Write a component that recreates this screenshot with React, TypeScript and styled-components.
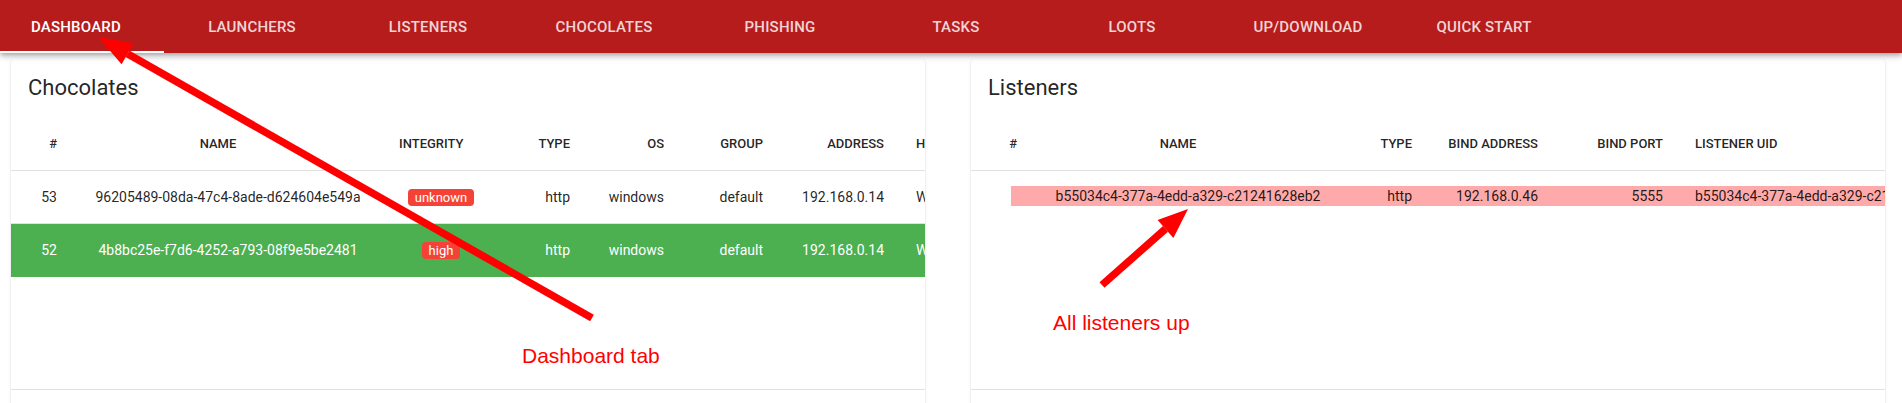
import React from 'react';
import styled, { createGlobalStyle } from 'styled-components';

const GlobalStyle = createGlobalStyle`
  html, body { margin: 0; padding: 0; background: #fff; }
  body {
    font-family: Roboto, "Liberation Sans", Arial, sans-serif;
    color: rgba(0, 0, 0, 0.87);
    overflow: hidden;
  }
  * { box-sizing: border-box; }
`;

const Page = styled.div`
  position: relative;
  width: 1902px;
  height: 403px;
  overflow: hidden;
  background: #fff;
`;

const NavBar = styled.header`
  position: relative;
  z-index: 2;
  height: 53px;
  background: #b71c1c;
  box-shadow: 0 2px 4px -1px rgba(0, 0, 0, 0.2), 0 4px 5px 0 rgba(0, 0, 0, 0.14),
    0 1px 10px 0 rgba(0, 0, 0, 0.12);
  display: flex;
  overflow: hidden;
`;

const TabList = styled.nav`
  display: flex;
  margin-left: -12px;
`;

const Tab = styled.div<{ $active?: boolean }>`
  position: relative;
  flex: 0 0 176px;
  height: 53px;
  display: flex;
  align-items: center;
  justify-content: center;
  font-size: 15px;
  font-weight: 500;
  letter-spacing: 0.2px;
  text-transform: uppercase;
  white-space: nowrap;
  color: ${(p) => (p.$active ? '#ffffff' : 'rgba(255, 255, 255, 0.82)')};

  &::after {
    content: '';
    display: ${(p) => (p.$active ? 'block' : 'none')};
    position: absolute;
    left: 12px;
    right: 0;
    bottom: 0;
    height: 2px;
    background: #ffffff;
  }
`;

const Content = styled.main`
  display: grid;
  grid-template-columns: 914px 914px;
  column-gap: 46px;
  padding: 6px 0 0 11px;
`;

const Card = styled.section`
  position: relative;
  height: 400px;
  background: #fff;
  border-radius: 4px;
  overflow: hidden;
  box-shadow: 0 2px 1px -1px rgba(0, 0, 0, 0.2), 0 1px 1px 0 rgba(0, 0, 0, 0.14),
    0 1px 3px 0 rgba(0, 0, 0, 0.12);
`;

const CardTitle = styled.h2`
  margin: 0;
  padding: 16px 17px 17px;
  font-size: 22px;
  font-weight: 400;
  line-height: 26px;
  color: rgba(0, 0, 0, 0.87);
`;

type Align = 'left' | 'center' | 'right';

const justify = (a: Align) =>
  a === 'center' ? 'center' : a === 'right' ? 'flex-end' : 'flex-start';

const HeadRow = styled.div<{ $cols: string }>`
  display: grid;
  grid-template-columns: ${(p) => p.$cols};
  height: 53px;
  align-items: center;
  border-bottom: 1px solid #e0e0e0;
`;

const HeadCell = styled.div<{ $align: Align }>`
  display: flex;
  justify-content: ${(p) => justify(p.$align)};
  padding: 0 16px;
  font-size: 13px;
  font-weight: 500;
  line-height: 1.2;
  white-space: nowrap;
  color: rgba(0, 0, 0, 0.87);
`;

const SortSpace = styled.span`
  display: inline-block;
  width: 20px;
`;

const Body = styled.div`
  display: flex;
  flex-direction: column;
  min-height: 218px;
`;

const Row = styled.div<{ $cols: string; $success?: boolean }>`
  display: grid;
  grid-template-columns: ${(p) => p.$cols};
  height: 53px;
  align-items: center;
  font-size: 14px;
  background: ${(p) => (p.$success ? '#4caf50' : 'transparent')};
  color: ${(p) => (p.$success ? '#ffffff' : 'rgba(0, 0, 0, 0.87)')};
  border-bottom: 1px solid ${(p) => (p.$success ? '#4caf50' : '#e0e0e0')};
`;

const HighlightRow = styled.div<{ $cols: string }>`
  display: grid;
  grid-template-columns: ${(p) => p.$cols};
  height: 20px;
  margin: 15px 0 18px 40px;
  align-items: center;
  font-size: 14px;
  background: #ffaaaa;
  color: rgba(0, 0, 0, 0.87);
`;

const Cell = styled.div<{ $align: Align }>`
  display: flex;
  justify-content: ${(p) => justify(p.$align)};
  padding: 0 16px;
  line-height: 1.2;
  white-space: nowrap;
`;

const Badge = styled.span`
  display: inline-block;
  height: 17px;
  padding: 0 7px;
  border-radius: 4px;
  background: #f44336;
  color: #fff;
  font-size: 13px;
  line-height: 17px;
`;

const Footer = styled.div`
  height: 52px;
  border-top: 1px solid #e0e0e0;
`;

const Annotations = styled.svg`
  position: absolute;
  left: 0;
  top: 0;
  z-index: 5;
  pointer-events: none;
`;

const Note = styled.span<{ $x: number; $y: number }>`
  position: absolute;
  left: ${(p) => p.$x}px;
  top: ${(p) => p.$y}px;
  z-index: 6;
  font-family: "Liberation Sans", Arial, sans-serif;
  font-size: 21px;
  line-height: 21px;
  color: #ff0000;
  white-space: nowrap;
`;

type Col = { label: string; align: Align; sort?: boolean };

const tabs = [
  'Dashboard',
  'Launchers',
  'Listeners',
  'Chocolates',
  'Phishing',
  'Tasks',
  'Loots',
  'Up/Download',
  'Quick Start',
];

const chocCols = '62px 310px 116px 87px 94px 99px 121px 220px';
const chocHead: Col[] = [
  { label: '#', align: 'right' },
  { label: 'NAME', align: 'center', sort: true },
  { label: 'INTEGRITY', align: 'center', sort: true },
  { label: 'TYPE', align: 'right' },
  { label: 'OS', align: 'right' },
  { label: 'GROUP', align: 'right' },
  { label: 'ADDRESS', align: 'right' },
  { label: 'HOSTNAME', align: 'left' },
];

const chocolates = [
  {
    id: '53',
    name: '96205489-08da-47c4-8ade-d624604e549a',
    integrity: 'unknown',
    type: 'http',
    os: 'windows',
    group: 'default',
    address: '192.168.0.14',
    host: 'WINDEV2108EVAL',
    success: false,
  },
  {
    id: '52',
    name: '4b8bc25e-f7d6-4252-a793-08f9e5be2481',
    integrity: 'high',
    type: 'http',
    os: 'windows',
    group: 'default',
    address: '192.168.0.14',
    host: 'WINDEV2108EVAL',
    success: true,
  },
];

const listenerCols = '62px 310px 85px 126px 125px 420px';
const listenerRowCols = '22px 310px 85px 126px 125px 420px';
const listenerHead: Col[] = [
  { label: '#', align: 'right' },
  { label: 'NAME', align: 'center', sort: true },
  { label: 'TYPE', align: 'right' },
  { label: 'BIND ADDRESS', align: 'right' },
  { label: 'BIND PORT', align: 'right' },
  { label: 'LISTENER UID', align: 'left' },
];

const listeners = [
  {
    name: 'b55034c4-377a-4edd-a329-c21241628eb2',
    type: 'http',
    address: '192.168.0.46',
    port: '5555',
    uid: 'b55034c4-377a-4edd-a329-c21241628eb2',
  },
];

function Head({ cols, head }: { cols: string; head: Col[] }) {
  return (
    <HeadRow $cols={cols}>
      {head.map((c) => (
        <HeadCell key={c.label} $align={c.align}>
          <span>{c.label}</span>
          {c.sort && <SortSpace />}
        </HeadCell>
      ))}
    </HeadRow>
  );
}

export default function App() {
  return (
    <Page>
      <GlobalStyle />
      <NavBar>
        <TabList>
          {tabs.map((t, i) => (
            <Tab key={t} $active={i === 0}>
              {t}
            </Tab>
          ))}
        </TabList>
      </NavBar>

      <Content>
        <Card>
          <CardTitle>Chocolates</CardTitle>
          <Head cols={chocCols} head={chocHead} />
          <Body>
            {chocolates.map((c) => (
              <Row key={c.id} $cols={chocCols} $success={c.success}>
                <Cell $align="right">{c.id}</Cell>
                <Cell $align="center">{c.name}</Cell>
                <Cell $align="center">
                  <Badge>{c.integrity}</Badge>
                </Cell>
                <Cell $align="right">{c.type}</Cell>
                <Cell $align="right">{c.os}</Cell>
                <Cell $align="right">{c.group}</Cell>
                <Cell $align="right">{c.address}</Cell>
                <Cell $align="left">{c.host}</Cell>
              </Row>
            ))}
          </Body>
          <Footer />
        </Card>

        <Card>
          <CardTitle>Listeners</CardTitle>
          <Head cols={listenerCols} head={listenerHead} />
          <Body>
            {listeners.map((l) => (
              <HighlightRow key={l.uid} $cols={listenerRowCols}>
                <Cell $align="right" />
                <Cell $align="center">{l.name}</Cell>
                <Cell $align="right">{l.type}</Cell>
                <Cell $align="right">{l.address}</Cell>
                <Cell $align="right">{l.port}</Cell>
                <Cell $align="left">{l.uid}</Cell>
              </HighlightRow>
            ))}
          </Body>
          <Footer />
        </Card>
      </Content>

      <Annotations width={1902} height={403} viewBox="0 0 1902 403">
        <line x1="127.5" y1="53.8" x2="592" y2="318" stroke="#ff0000" strokeWidth="7.5" />
        <polygon points="98,37 121.6,64.2 133.4,43.4" fill="#ff0000" />
        <line x1="1102" y1="285" x2="1165.5" y2="228.9" stroke="#ff0000" strokeWidth="7.5" />
        <polygon points="1188,209 1173.4,237.9 1157.6,219.9" fill="#ff0000" />
      </Annotations>
      <Note $x={522} $y={345}>
        Dashboard tab
      </Note>
      <Note $x={1053} $y={312}>
        All listeners up
      </Note>
    </Page>
  );
}
